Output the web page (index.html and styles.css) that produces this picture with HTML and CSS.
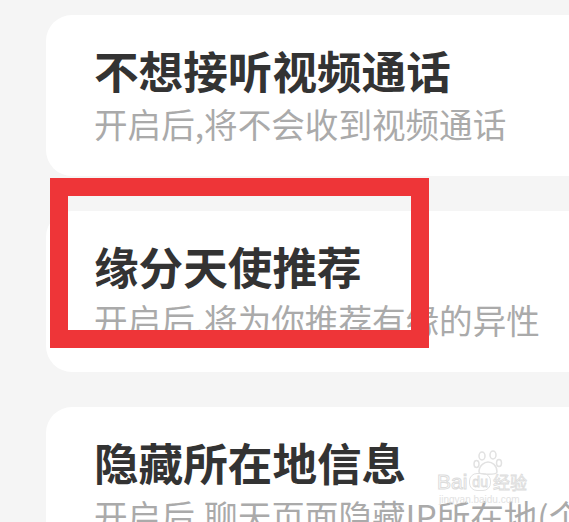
FILE: index.html
```html
<!DOCTYPE html>
<html lang="zh-CN">
<head>
<meta charset="utf-8">
<link rel="stylesheet" href="styles.css">
</head>
<body>
<div class="list">
  <div class="card">
    <div class="title">不想接听视频通话</div>
    <div class="sub">开启后,将不会收到视频通话</div>
  </div>
  <div class="card">
    <div class="title">缘分天使推荐</div>
    <div class="sub">开启后,将为你推荐有缘的异性</div>
  </div>
  <div class="card">
    <div class="title">隐藏所在地信息</div>
    <div class="sub">开启后,聊天页面隐藏IP所在地(个人主页仍展示)</div>
  </div>
</div>
<div class="highlight"></div>
<div class="watermark">
  <svg class="paw" width="30" height="26" viewBox="0 0 30 26">
    <g fill="none" stroke="#e2e2e2" stroke-width="1.5">
      <ellipse cx="9" cy="6" rx="3" ry="4"/>
      <ellipse cx="20" cy="5" rx="3" ry="4"/>
      <ellipse cx="3.5" cy="14" rx="2.5" ry="3.5"/>
      <ellipse cx="26" cy="13" rx="2.5" ry="3.5"/>
      <path d="M6 22 C6 15 12 12 15 12 C19 12 24 15 24 22 C24 25 6 25 6 22 Z"/>
    </g>
  </svg>
  <div class="wm-line"><span class="wm-bai">Bai</span><span class="wm-du">du</span><span class="wm-jy">经验</span></div>
  <div class="wm-url">jingyan.baidu.com</div>
</div>
</body>
</html>
```
FILE: styles.css
```css
html, body {
  margin: 0;
  padding: 0;
  background: #f5f5f5;
  overflow: hidden;
  width: 569px;
  height: 522px;
}
body {
  font-family: "Noto Sans CJK SC", "Noto Sans", sans-serif;
  position: relative;
}
.list {
  display: flex;
  flex-direction: column;
  gap: 35px;
  padding: 15px 0 0 46px;
}
.card {
  background: #fff;
  border-radius: 26px;
  width: 560px;
  height: 161px;
  box-sizing: border-box;
  padding: 29px 0 0 48px;
  white-space: nowrap;
  overflow: hidden;
}
.title {
  font-size: 44.6px;
  line-height: 52px;
  font-weight: 700;
  color: #333;
}
.sub {
  margin-top: 8px;
  font-size: 33.6px;
  line-height: 40px;
  color: #aaa;
}
.highlight {
  position: absolute;
  left: 50px;
  top: 178px;
  width: 343px;
  height: 134px;
  border: 18px solid #ee3538;
}
.watermark {
  position: absolute;
  left: 437px;
  top: 452px;
  width: 110px;
  display: flex;
  flex-direction: column;
  align-items: flex-start;
  color: #e0e0e0;
  font-family: "Liberation Sans", sans-serif;
}
.paw {
  position: absolute;
  left: 36px;
  top: -2px;
}
.wm-line {
  display: flex;
  align-items: center;
  gap: 2px;
  margin-top: 20px;
}
.wm-bai {
  font-size: 21px;
  line-height: 20px;
  color: #fff;
  -webkit-text-stroke: 1px #dcdcdc;
}
.wm-du {
  font-size: 14px;
  line-height: 16px;
  color: #fff;
  -webkit-text-stroke: 0.8px #dcdcdc;
  border: 1.5px solid #e2e2e2;
  border-radius: 8px;
  padding: 0 2px;
}
.wm-jy {
  font-family: "Noto Sans CJK SC", sans-serif;
  font-size: 17px;
  line-height: 18px;
  color: #fff;
  -webkit-text-stroke: 0.8px #dcdcdc;
}
.wm-url {
  font-size: 10px;
  line-height: 12px;
  color: #e2e2e2;
  margin-left: 2px;
  margin-top: 2px;
}
```
